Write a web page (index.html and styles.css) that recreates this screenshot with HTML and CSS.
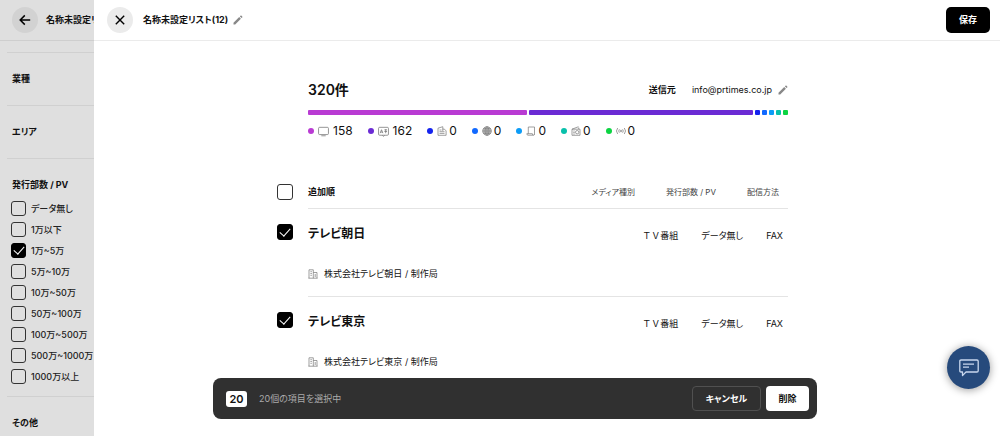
FILE: index.html
```html
<!DOCTYPE html>
<html lang="ja">
<head>
<meta charset="utf-8">
<meta name="viewport" content="width=device-width, initial-scale=1">
<title>名称未設定リスト(12)</title>
<link rel="stylesheet" href="styles.css">
</head>
<body>
<div class="app">
  <aside class="sidebar">
    <header class="topbar sidebar-top">
      <button class="round-btn" type="button" aria-label="戻る">
        <svg width="12" height="12" viewBox="0 0 12 12" fill="none" stroke="currentColor" stroke-width="1.5"><path d="M11.2 6H1.4M5.8 1.4 1.2 6l4.6 4.6"/></svg>
      </button>
      <span class="list-name">名称未設定リスト(12)</span>
    </header>
    <div class="filters">
      <section class="filter"><h2>業種</h2></section>
      <section class="filter"><h2>エリア</h2></section>
      <section class="filter open">
        <h2>発行部数 / PV</h2>
        <div class="options">
          <label class="option"><input class="check" type="checkbox">データ無し</label>
          <label class="option"><input class="check" type="checkbox">1万以下</label>
          <label class="option"><input class="check" type="checkbox" checked>1万~5万</label>
          <label class="option"><input class="check" type="checkbox">5万~10万</label>
          <label class="option"><input class="check" type="checkbox">10万~50万</label>
          <label class="option"><input class="check" type="checkbox">50万~100万</label>
          <label class="option"><input class="check" type="checkbox">100万~500万</label>
          <label class="option"><input class="check" type="checkbox">500万~1000万</label>
          <label class="option"><input class="check" type="checkbox">1000万以上</label>
        </div>
      </section>
      <section class="filter"><h2>その他</h2></section>
    </div>
  </aside>

  <div class="panel">
    <header class="topbar panel-top">
      <button class="round-btn" type="button" aria-label="閉じる">
        <svg width="10" height="10" viewBox="0 0 10 10" fill="none" stroke="currentColor" stroke-width="1.4"><path d="M.8.8l8.4 8.4M9.2.8.8 9.2"/></svg>
      </button>
      <h1 class="list-name">名称未設定リスト(12)</h1>
      <button class="icon-btn" type="button" aria-label="名前を編集">
        <svg width="10" height="10" viewBox="0 0 10 10" fill="#888"><path d="M.5 9.5V7.8L6.200 2.100l1.700 1.700-5.700 5.700zM6.900 1.400l.8-.8q.3-.3.600 0l1.100 1.100q.3.300 0 .6l-.8.8z"/></svg>
      </button>
      <button class="save" type="button">保存</button>
    </header>

    <main class="content">
      <section class="summary">
        <div class="summary-head">
          <h2 class="total">320件</h2>
          <span class="sender-label">送信元</span>
          <span class="sender">info@prtimes.co.jp</span>
          <button class="icon-btn" type="button" aria-label="送信元を編集">
            <svg width="10" height="10" viewBox="0 0 10 10" fill="#888"><path d="M.5 9.5V7.8L6.200 2.100l1.700 1.700-5.700 5.700zM6.900 1.400l.8-.8q.3-.3.600 0l1.100 1.100q.3.300 0 .6l-.8.8z"/></svg>
          </button>
        </div>
        <div class="bar">
          <span class="seg c1" style="flex-grow:158"></span>
          <span class="seg c2" style="flex-grow:162"></span>
          <span class="seg c3"></span>
          <span class="seg c4"></span>
          <span class="seg c5"></span>
          <span class="seg c6"></span>
          <span class="seg c7"></span>
        </div>
        <ul class="legend">
          <li class="wide"><i class="dot c1"></i><svg class="ico" viewBox="0 0 10 10"><rect x=".5" y="1.2" width="9" height="6.6" rx="1"/><path d="M3 8.9h4"/></svg>158</li>
          <li class="wide"><i class="dot c2"></i><svg class="ico" viewBox="0 0 10 10"><rect x=".5" y="1.2" width="9" height="7.2" rx="1"/><path d="M2 6.5 3.2 3.4 4.4 6.5M2.4 5.5h1.7M5.8 3.5h2.4M5.8 5h2.4M7 3v3.6M4 8.6l1 .8 1-.8"/></svg>162</li>
          <li><i class="dot c3"></i><svg class="ico" viewBox="0 0 10 10"><path d="M1 9.3V2.2L5.8.7v2.4h1.6l1.7 1.8v4.4zM2.5 4h2M2.5 5.7h5M2.5 7.4h5M5.8 3v2"/></svg>0</li>
          <li><i class="dot c4"></i><svg class="ico globe" viewBox="0 0 10 10"><circle cx="5" cy="5" r="4.3"/><ellipse cx="5" cy="5" rx="2" ry="4.3"/><path d="M5 .7v8.6M.7 5h8.6M1.4 2.8h7.2M1.4 7.2h7.2"/></svg>0</li>
          <li><i class="dot c5"></i><svg class="ico" viewBox="0 0 10 10"><path d="M2.3 7.7V1h6.2v7.7M.8 7.7h5.6q0 1.5 1 1.5t1.1-1M.8 7.7q0 1.5 1.2 1.5h5.4"/></svg>0</li>
          <li><i class="dot c6"></i><svg class="ico" viewBox="0 0 10 10"><path d="M1 3.2h8v6.1H1zM1 3.2 7.5.7M2.3 5h1.4M2.3 6.5h1.4M2.3 8h1.4M7.7 1.5v1.7"/><circle cx="6.2" cy="6.2" r="1.7"/></svg>0</li>
          <li><i class="dot c7"></i><svg class="ico" viewBox="0 0 10 10"><circle cx="5" cy="5" r=".8"/><path d="M3.4 3.3q-1.4 1.7 0 3.4M6.6 3.3q1.4 1.7 0 3.4M1.7 2q-2.5 3 0 6M8.3 2q2.5 3 0 6"/></svg>0</li>
        </ul>
      </section>

      <section class="list">
        <div class="row list-head">
          <input class="check large" type="checkbox" id="all" aria-label="すべて選択">
          <div class="cell">
            <label class="order" for="all">追加順</label>
            <div class="heads"><span>メディア種別</span><span>発行部数 / PV</span><span>配信方法</span></div>
          </div>
        </div>
        <article class="row">
          <input class="check large" type="checkbox" id="m1" checked>
          <div class="cell">
            <label class="name" for="m1">テレビ朝日</label>
            <div class="values"><span class="kind">ＴＶ番組</span><span>データ無し</span><span>FAX</span></div>
            <p class="company"><svg class="ico" viewBox="0 0 10 10"><path d="M1 9.2V.8h4.3v8.4M5.3 3.5H9v5.7M.4 9.2h9.2M2.4 2.7h1.5M2.4 4.5h1.5M2.4 6.3h1.5M7.2 5v3"/></svg>株式会社テレビ朝日 / 制作局</p>
          </div>
        </article>
        <article class="row">
          <input class="check large" type="checkbox" id="m2" checked>
          <div class="cell">
            <label class="name" for="m2">テレビ東京</label>
            <div class="values"><span class="kind">ＴＶ番組</span><span>データ無し</span><span>FAX</span></div>
            <p class="company"><svg class="ico" viewBox="0 0 10 10"><path d="M1 9.2V.8h4.3v8.4M5.3 3.5H9v5.7M.4 9.2h9.2M2.4 2.7h1.5M2.4 4.5h1.5M2.4 6.3h1.5M7.2 5v3"/></svg>株式会社テレビ東京 / 制作局</p>
          </div>
        </article>
      </section>
    </main>
  </div>

  <div class="selection">
    <span class="count">20</span>
    <span class="selection-text">20個の項目を選択中</span>
    <button class="cancel" type="button">キャンセル</button>
    <button class="delete" type="button">削除</button>
  </div>

  <button class="chat" type="button" aria-label="チャット">
    <svg width="22" height="20" viewBox="0 0 22 20" fill="none" stroke="#c9d8ee" stroke-width="1.3" stroke-linejoin="round"><path d="M3 2h16q1.2 0 1.2 1.2v9.6q0 1.2-1.2 1.200H8L4.500 17.600V14H3q-1.200 0-1.200-1.200V3.200Q1.800 2 3 2z"/><path d="M5 6.200h11M5 9.200h6"/></svg>
  </button>
</div>
</body>
</html>
```
FILE: styles.css
```css
* { box-sizing: border-box; }

body {
  margin: 0;
  color: #111;
  background: #fff;
  font-family: Inter, "Noto Sans CJK JP", sans-serif;
  font-size: 9px;
  line-height: 16px;
  font-feature-settings: "palt";
}

h1, h2, p, ul { margin: 0; padding: 0; font-size: inherit; }

button {
  padding: 0;
  border: 0;
  color: inherit;
  font: inherit;
  font-feature-settings: inherit;
  cursor: pointer;
}

.app {
  display: flex;
  height: 100vh;
  overflow: hidden;
}

/* Top bars */
.topbar {
  display: flex;
  align-items: center;
  height: 41px;
  border-bottom: 1px solid #ebebeb;
}

.round-btn {
  display: grid;
  place-items: center;
  flex: none;
  width: 26px;
  height: 26px;
  border-radius: 50%;
  background: #ebebeb;
  color: #000;
}

.list-name {
  margin-left: 10px;
  font-weight: 700;
  white-space: nowrap;
}

.icon-btn {
  display: grid;
  place-items: center;
  background: none;
}

.panel-top { padding: 0 10px 0 13px; }
.panel-top .icon-btn { margin-left: 5px; }

.save {
  width: 44px;
  height: 26px;
  margin-left: auto;
  border-radius: 5px;
  background: #000;
  color: #fff;
  font-weight: 700;
}

/* Sidebar */
.sidebar {
  flex: none;
  width: 94px;
  overflow: hidden;
  background: #dfdfdf;
}

.sidebar-top {
  padding-left: 12px;
  border-color: #cecece;
}

.sidebar .round-btn { background: #d2d2d2; }
.sidebar .list-name { margin-left: 8px; }

.filters { padding: 11px 0 0 7px; }

.filter {
  padding: 18px 0 18px 4px;
  border-top: 1px solid #d0d0d0;
  white-space: nowrap;
}

.filter.open { padding-bottom: 12px; }

.filter h2 {
  padding-left: 1px;
  font-weight: 700;
}

.options {
  display: grid;
  gap: 6px;
  padding-top: 8px;
}

.option {
  display: flex;
  align-items: center;
  gap: 5px;
  height: 15px;
  color: #222;
  font-weight: 500;
}

/* Check boxes */
.check {
  appearance: none;
  display: grid;
  place-items: center;
  flex: none;
  width: 15px;
  height: 15px;
  margin: 0;
  border: 1px solid #333;
  border-radius: 3px;
}

.check.large {
  width: 16px;
  height: 16px;
  background: #fff;
}

.check:checked {
  border-color: #000;
  background: #000;
}

.check:checked::before {
  content: "";
  width: 9px;
  height: 5px;
  margin-bottom: 3px;
  border: solid #fff;
  border-width: 0 0 1px 1px;
  transform: rotate(-48deg);
}

/* Panel */
.panel {
  flex: 1;
  min-width: 0;
  background: #fff;
}

.content {
  max-width: 542px;
  margin: 0 auto;
  padding: 39px 30px 0 1px;
}

.summary { padding-left: 31px; }

.summary-head {
  display: flex;
  align-items: center;
  height: 20px;
}

.total {
  margin-right: auto;
  font-size: 14px;
  font-weight: 600;
}

.sender-label { font-weight: 700; }

.sender { margin: 0 6px 0 16px; }

.bar {
  display: flex;
  gap: 2px;
  margin-top: 10px;
}

.seg {
  flex: 0 0 5px;
  height: 5px;
  border-radius: 1px;
}

.seg.c1, .seg.c2 { flex-basis: 0; }

.c1 { background: #b93bd3; }
.c2 { background: #6b2bd4; }
.c3 { background: #1423ee; }
.c4 { background: #1169ff; }
.c5 { background: #0c9cf7; }
.c6 { background: #08c0ab; }
.c7 { background: #0cd442; }

.legend {
  display: flex;
  gap: 15px;
  margin-top: 8px;
  list-style: none;
  font-size: 12px;
}

.legend li {
  display: flex;
  align-items: center;
}

.dot {
  width: 6px;
  height: 6px;
  margin-right: 4px;
  border-radius: 50%;
}

.ico {
  flex: none;
  width: 10px;
  height: 10px;
  margin-right: 2px;
  fill: none;
  stroke: #777;
  stroke-width: 0.7;
}

.wide .ico {
  width: 11px;
  height: 11px;
  margin-right: 4px;
}

.globe { fill: #ccc; }

/* Media list */
.list { margin-top: 41px; }

.row {
  display: grid;
  grid-template-columns: 31px 1fr;
}

.row > .check { margin-top: 15px; }

.list-head > .check { margin-top: 4px; }

.cell {
  display: grid;
  grid-template-columns: 1fr auto;
  min-height: 88px;
  padding-top: 16px;
  border-bottom: 1px solid #e4e4e4;
  align-content: start;
}

.list-head .cell {
  min-height: 0;
  padding: 4px 0 8px;
}

.order {
  font-size: 9px;
  font-weight: 700;
}

.heads {
  display: flex;
  gap: 31px;
  padding-right: 9px;
  color: #444;
  font-size: 8px;
}

.name {
  font-size: 12px;
  font-weight: 600;
  line-height: 18px;
}

.values {
  display: flex;
  gap: 23px;
  padding: 3px 5px 0 0;
}

.kind { font-feature-settings: normal; }

.company {
  display: flex;
  align-items: center;
  grid-column: 1 / -1;
  margin-top: 22px;
}

.company .ico { margin-right: 6px; }

/* Floating selection bar */
.selection {
  position: fixed;
  right: 183px;
  bottom: 17px;
  left: 213px;
  display: flex;
  align-items: center;
  padding: 8px 8px 8px 13px;
  border-radius: 8px;
  background: #303030;
}

.count {
  min-width: 21px;
  border-radius: 3px;
  background: #fff;
  font-size: 11px;
  font-weight: 600;
  text-align: center;
}

.selection-text {
  margin: 0 auto 0 12px;
  color: #aaa;
}

.cancel, .delete {
  height: 25px;
  border-radius: 4px;
  font-weight: 700;
}

.cancel {
  width: 69px;
  margin-right: 5px;
  border: 1px solid #505050;
  background: none;
  color: #fff;
}

.delete {
  width: 43px;
  background: #fff;
}

.chat {
  position: fixed;
  right: 10px;
  bottom: 47px;
  display: grid;
  place-items: center;
  width: 43px;
  height: 43px;
  border-radius: 50%;
  background: #264a7c;
  box-shadow: 0 1px 8px rgba(0, 0, 0, 0.4);
}
```
